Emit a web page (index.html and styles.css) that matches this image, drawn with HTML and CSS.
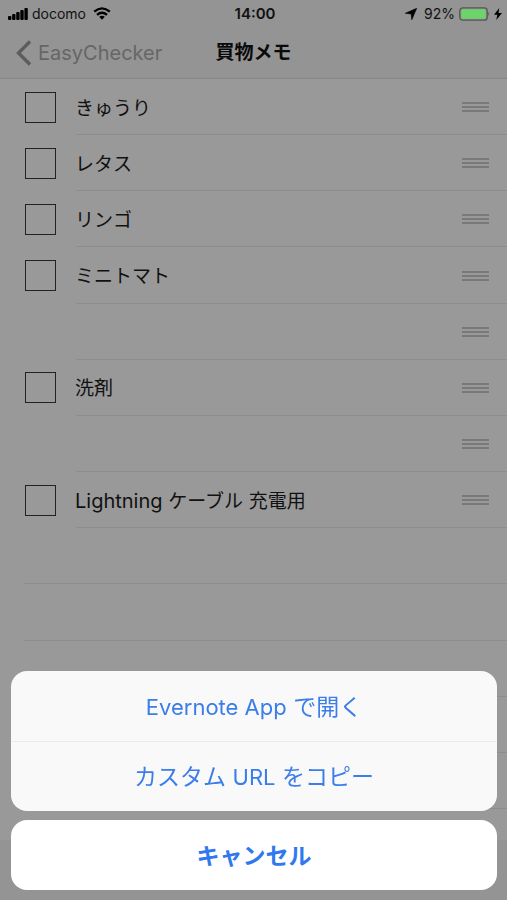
FILE: index.html
```
<!DOCTYPE html>
<html lang="ja">
<head>
<meta charset="utf-8">
<meta name="viewport" content="width=device-width, initial-scale=1">
<title>買物メモ</title>
<link rel="stylesheet" href="styles.css">
</head>
<body>
<div class="screen">
  <header class="header">
    <div class="status">
      <div class="status-left">
        <svg class="signal" width="20" height="12" viewBox="0 0 20 12" aria-hidden="true"><rect x="0" y="8" width="3.4" height="4" rx="1"/><rect x="4.1" y="6" width="3.4" height="6" rx="1"/><rect x="8.2" y="4" width="3.4" height="8" rx="1"/><rect x="12.3" y="2" width="3.4" height="10" rx="1"/><rect x="16.4" y="0" width="3.4" height="12" rx="1"/></svg>
        <span>docomo</span>
        <svg class="wifi" width="18" height="13" viewBox="0 0 18 13" aria-hidden="true"><path d="M1.2 4.7Q9 -2 16.8 4.7M4 7.8Q9 3.6 14 7.8" fill="none" stroke="#000" stroke-width="2.3"/><path d="M6.2 9.7Q9 7.6 11.8 9.7L9 12.7Z"/></svg>
      </div>
      <time class="clock">14:00</time>
      <div class="status-right">
        <svg class="location" width="12" height="12" viewBox="0 0 12 12" aria-hidden="true"><path d="M11.7 .3L6.8 11.7L6.2 6L.3 5.3Z" stroke="#000" stroke-width=".6"/></svg>
        <span>92%</span>
        <svg class="battery" width="32" height="14" viewBox="0 0 32 14" aria-hidden="true"><rect x=".8" y=".8" width="27.4" height="12.4" rx="3" fill="none" stroke="#555" stroke-width="1.3"/><rect x="2.3" y="2.3" width="24.4" height="9.4" rx="1.5" fill="#6cd46a"/><path d="M29.4 4.8Q31.2 7 29.4 9.2Z" fill="#555"/></svg>
        <svg class="bolt" width="8" height="12" viewBox="0 0 8 12" aria-hidden="true"><path d="M5.3 0L0 6.8H3.3L2.3 12L8 5H4.5Z"/></svg>
      </div>
    </div>
    <nav class="nav">
      <a class="back" href="#"><svg width="16" height="26" viewBox="0 0 16 26" aria-hidden="true"><path d="M14 1.5L2.5 13L14 24.5" fill="none" stroke="#5c5c5c" stroke-width="3.4"/></svg>EasyChecker</a>
      <h1 class="title">買物メモ</h1>
    </nav>
  </header>
  <ul class="list">
    <li class="row"><label class="item"><input class="check" type="checkbox"><span class="text">きゅうり</span></label><span class="grip"></span></li>
    <li class="row"><label class="item"><input class="check" type="checkbox"><span class="text">レタス</span></label><span class="grip"></span></li>
    <li class="row"><label class="item"><input class="check" type="checkbox"><span class="text">リンゴ</span></label><span class="grip"></span></li>
    <li class="row"><label class="item"><input class="check" type="checkbox"><span class="text">ミニトマト</span></label><span class="grip"></span></li>
    <li class="row"><span class="grip"></span></li>
    <li class="row"><label class="item"><input class="check" type="checkbox"><span class="text">洗剤</span></label><span class="grip"></span></li>
    <li class="row"><span class="grip"></span></li>
    <li class="row"><label class="item"><input class="check" type="checkbox"><span class="text"><span class="latin">Lightning </span>ケーブル<span class="latin"> </span>充電用</span></label><span class="grip"></span></li>
    <li class="row blank"></li>
    <li class="row blank"></li>
    <li class="row blank"></li>
    <li class="row blank"></li>
    <li class="row blank"></li>
  </ul>
  <footer class="toolbar"></footer>
</div>
<div class="sheet" role="dialog" aria-label="メニュー">
  <div class="group">
    <button class="action" type="button"><span class="latin-action">Evernote App</span> で開く</button>
    <button class="action" type="button">カスタム <span class="latin-action">URL</span> をコピー</button>
  </div>
  <button class="action cancel" type="button">キャンセル</button>
</div>
</body>
</html>
```
FILE: styles.css
```
* {
  box-sizing: border-box;
}

body {
  margin: 0;
  background: #999;
  color: #111;
  font-family: Inter, "Noto Sans CJK JP", sans-serif;
}

.screen {
  min-height: 100vh;
  display: flex;
  flex-direction: column;
}

.header {
  background: #949494;
  border-bottom: 1px solid #858585;
}

.status {
  height: 27px;
  padding: 0 5px 0 8px;
  display: grid;
  grid-template-columns: 1fr auto 1fr;
  align-items: center;
  font-size: 14px;
  color: #111;
}

.status-left,
.status-right {
  display: flex;
  align-items: center;
  gap: 4px;
}

.status-right {
  justify-content: flex-end;
}

.wifi,
.location {
  margin: 0 3px;
}

.bolt {
  margin-left: -1px;
}

.clock {
  font-size: 15px;
  font-weight: 600;
}

.nav {
  height: 51px;
  padding: 0 16px;
  display: grid;
  grid-template-columns: 1fr auto 1fr;
  align-items: center;
}

.back {
  display: flex;
  align-items: center;
  gap: 6px;
  color: #666;
  font-size: 20px;
  text-decoration: none;
}

.title {
  margin: 0;
  font-size: 19px;
  font-weight: 700;
  line-height: 28px;
  color: #0a0a0a;
}

.list {
  flex: 1;
  margin: 0 0 31px;
  padding: 0;
  list-style: none;
  display: grid;
  grid-auto-rows: 1fr;
}

.row {
  display: flex;
  align-items: center;
  padding: 0 18px 0 25px;
  background: linear-gradient(#8d8d8d, #8d8d8d) 76px 100% / 100% 1px no-repeat;
}

.blank {
  background-position-x: 24px;
}

.item {
  flex: 1;
  display: flex;
  align-items: center;
  gap: 19px;
  font-size: 19px;
  line-height: 28px;
}

.text {
  padding-top: 3px;
}

.latin {
  font-size: 20px;
  white-space: pre;
}

.check {
  appearance: none;
  width: 31px;
  height: 31px;
  margin: 0;
  border: 1px solid #222;
}

.grip {
  width: 27px;
  height: 10px;
  margin-left: auto;
  background: repeating-linear-gradient(#797979 0 2px, transparent 2px 4px);
}

.toolbar {
  height: 60px;
  background: #949494;
}

.sheet {
  position: fixed;
  inset: auto 10px 10px 11px;
  display: flex;
  flex-direction: column;
  gap: 9px;
}

.group {
  display: flex;
  flex-direction: column;
  overflow: hidden;
  border-radius: 16px;
  background: #f9f9f9;
}

.action {
  height: 70px;
  padding: 0 0 3px;
  border: 0;
  background: transparent;
  color: #3b7de9;
  font: 400 23px Inter, "Noto Sans CJK JP", sans-serif;
}

.latin-action {
  font-size: 22px;
}

.action + .action {
  border-top: 1px solid #ececec;
}

.cancel {
  border-radius: 16px;
  background: #fff;
  color: #2f78ee;
  font-weight: 700;
}
```
